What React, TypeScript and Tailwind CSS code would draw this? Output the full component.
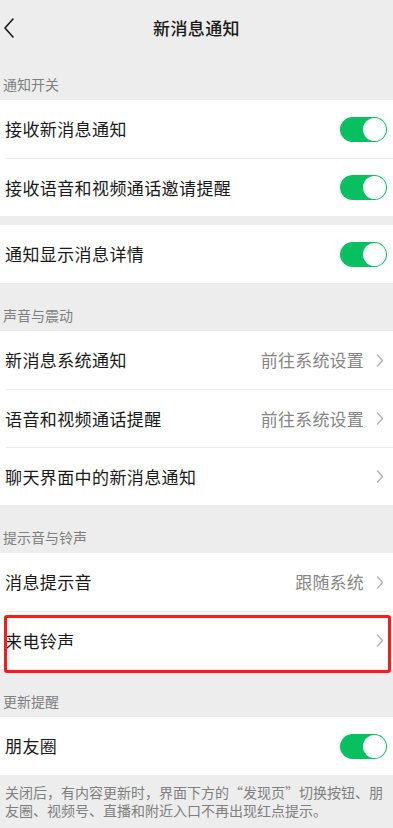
import { ReactNode } from 'react'

const font = { fontFamily: '"Noto Sans CJK SC", "Noto Sans", sans-serif' }

function Toggle() {
  return (
    <div className="w-[47px] h-[25px] rounded-full bg-[#07c160] flex items-center justify-end px-px">
      <div className="w-[23px] h-[23px] rounded-full bg-white" />
    </div>
  )
}

function Chevron() {
  return (
    <svg width="8" height="13" viewBox="0 0 8 13" fill="none">
      <polyline points="1.5,1 6.5,6.5 1.5,12" stroke="#b2b2b2" strokeWidth="1.4" strokeLinejoin="round" strokeLinecap="round" />
    </svg>
  )
}

function Label({ text, first }: { text: string; first?: boolean }) {
  return (
    <div className={`${first ? 'h-11' : 'h-12'} flex items-end pl-[3px] pb-[6px]`}>
      <span className="text-[14px] leading-5 text-[#7f7f7f]">{text}</span>
    </div>
  )
}

function Row({ title, value, toggle, divider, children }: {
  title: string
  value?: string
  toggle?: boolean
  divider?: boolean
  children?: ReactNode
}) {
  return (
    <div className="relative bg-white">
      {divider && <div className="ml-[6px] h-px bg-[#ececec]" />}
      <div className={`${divider ? 'h-[57px]' : 'h-[58px]'} flex items-center pl-[5px] ${toggle ? 'pr-[6px]' : 'pr-[9px]'}`}>
        <span className="flex-1 text-[17px] text-[#191919] tracking-[0.4px]">{title}</span>
        {value && <span className="text-[17px] text-[#858585] tracking-[0.2px] mr-[12px]">{value}</span>}
        {toggle ? <Toggle /> : <Chevron />}
      </div>
      {children}
    </div>
  )
}

export default function App() {
  return (
    <div className="min-h-[828px] w-[393px] bg-[#ededed]" style={font}>
      {/* nav bar */}
      <div className="relative h-14 flex items-center justify-center">
        <svg className="absolute left-[4px] top-[18px]" width="10" height="20" viewBox="0 0 10 20" fill="none">
          <polyline points="9,1 1,10 9,19" stroke="#191919" strokeWidth="1.6" strokeLinejoin="round" strokeLinecap="round" />
        </svg>
        <span className="text-[17px] font-medium text-[#191919] tracking-[0.4px]">新消息通知</span>
      </div>

      <Label text="通知开关" first />
      <div>
        <Row title="接收新消息通知" toggle />
        <Row title="接收语音和视频通话邀请提醒" toggle divider />
      </div>
      <div className="h-[9px]" />
      <Row title="通知显示消息详情" toggle />

      <Label text="声音与震动" />
      <div>
        <Row title="新消息系统通知" value="前往系统设置" />
        <Row title="语音和视频通话提醒" value="前往系统设置" divider />
        <Row title="聊天界面中的新消息通知" divider />
      </div>

      <Label text="提示音与铃声" />
      <div>
        <Row title="消息提示音" value="跟随系统" />
        <Row title="来电铃声" divider>
          {/* highlight box drawn over the row */}
          <div className="absolute left-[4px] right-[2px] top-[4px] -bottom-[4px] border-[3px] border-[#ff1a1a] rounded-[3px] pointer-events-none" />
        </Row>
      </div>

      <Label text="更新提醒" />
      <Row title="朋友圈" toggle />
      <p className="px-[5px] pt-[8px] text-[14px] leading-[18px] text-[#7f7f7f]">
        关闭后，有内容更新时，界面下方的“发现页”切换按钮、朋友圈、视频号、直播和附近入口不再出现红点提示。
      </p>
    </div>
  )
}
